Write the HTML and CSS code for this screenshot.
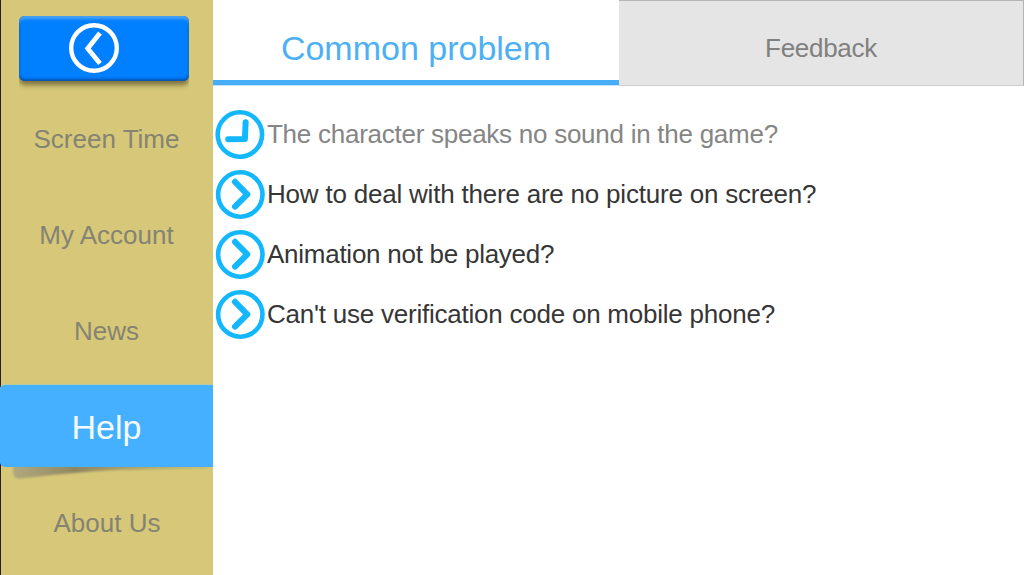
FILE: index.html
```html
<!DOCTYPE html>
<html lang="en">
<head>
<meta charset="utf-8">
<title>Help</title>
<link rel="stylesheet" href="styles.css">
</head>
<body>
<div class="app">
  <aside class="sidebar">
    <div class="back-wrap">
      <button class="back" aria-label="Back">
        <svg class="back-icon" width="50" height="50" viewBox="0 0 50 50" fill="none" stroke="#fff">
          <circle cx="25" cy="25" r="22.8" stroke-width="4.4"/>
          <path d="M31 10 L18.7 25.5 L31 40.5" stroke-width="4.8"/>
        </svg>
      </button>
    </div>
    <nav class="menu">
      <a class="item">Screen Time</a>
      <a class="item">My Account</a>
      <a class="item">News</a>
      <a class="item active">
        <svg class="fold" width="213" height="24" viewBox="0 0 213 24">
          <defs>
            <linearGradient id="shade" x1="0" x2="1" y1="0" y2="0">
              <stop offset="0" stop-color="#918d80" stop-opacity=".55"/>
              <stop offset=".32" stop-color="#77705a" stop-opacity=".75"/>
              <stop offset="1" stop-color="#a59b68" stop-opacity=".3"/>
            </linearGradient>
            <filter id="soft" x="-5%" y="-30%" width="110%" height="160%"><feGaussianBlur stdDeviation="1.2"/></filter>
          </defs>
          <path d="M13 -6 V7 Q14 13 20 12.5 C60 8 85 5.5 120 4 L208 2.5 V-6 Z" transform="translate(0 0)" fill="url(#shade)" filter="url(#soft)"/>
        </svg>
        <span class="label">Help</span>
      </a>
      <a class="item about">About Us</a>
    </nav>
  </aside>
  <main class="content">
    <div class="tabs">
      <div class="tab selected">Common problem</div>
      <div class="tab other">Feedback</div>
    </div>
    <ul class="questions">
      <li class="question read">
        <svg class="icon" width="50" height="50" viewBox="0 0 50 50"><circle cx="24.9" cy="24.5" r="22.2"/><path d="M30.6 12.3 L29.9 28.9 L13.2 29.2"/></svg>
        <span class="text t1">The character speaks no sound in the game?</span>
      </li>
      <li class="question">
        <svg class="icon" width="50" height="50" viewBox="0 0 50 50"><circle cx="25.3" cy="24.5" r="22.2"/><path d="M20 11.8 L32.3 24.3 L20 36.6"/></svg>
        <span class="text t2">How to deal with there are no picture on screen?</span>
      </li>
      <li class="question">
        <svg class="icon" width="50" height="50" viewBox="0 0 50 50"><circle cx="25.3" cy="24.5" r="22.2"/><path d="M20 11.8 L32.3 24.3 L20 36.6"/></svg>
        <span class="text t3">Animation not be played?</span>
      </li>
      <li class="question">
        <svg class="icon" width="50" height="50" viewBox="0 0 50 50"><circle cx="25.3" cy="24.5" r="22.2"/><path d="M20 11.8 L32.3 24.3 L20 36.6"/></svg>
        <span class="text t4">Can't use verification code on mobile phone?</span>
      </li>
    </ul>
  </main>
</div>
</body>
</html>
```
FILE: styles.css
```css
* { box-sizing: border-box; }
body { margin: 0; font-family: "Liberation Sans", Arial, sans-serif; font-size: 26px; background: #fff; overflow: hidden; }
.app { display: flex; width: 1024px; height: 575px; }
.sidebar { width: 213px; height: 575px; background: linear-gradient(90deg, #2a200c 1px, #d6c878 1px); padding-top: 16px; overflow: hidden; }
.back-wrap { width: 170px; height: 75px; margin-left: 19px; overflow: hidden; }
.back {
  display: flex; align-items: flex-start; width: 170px; height: 65px; margin: 0; padding: 7px 0 0 50px;
  border: 0; border-radius: 6px; background: #007fff;
  box-shadow: inset 0 4px 3px -1px #49a3f5, inset 0 -3px 3px -1px #0653ad, inset -1px 0 2px #0967c8, inset 1px 0 2px #0967c8, 0 4px 5px 0 rgba(85, 75, 40, .7);
}
.back-icon { display: block; flex: none; }
.menu { display: flex; flex-direction: column; }
.item { display: flex; align-items: center; justify-content: center; height: 96px; color: #858373; white-space: nowrap; }
.item.about { padding-left: 1px; }
.item.active { position: relative; align-items: flex-start; padding-top: 6px; color: #f4fbff; font-size: 34px; }
.label { width: 213px; height: 82px; line-height: 85px; text-align: center; background: #44b0ff; border-radius: 5px 0 0 5px; position: relative; box-shadow: 0 -1px 0 #b5cda0; }
.fold { position: absolute; left: 0; top: 87px; }
.content { flex: 1; }
.tabs { display: flex; height: 86px; }
.tab { display: flex; align-items: center; justify-content: center; height: 86px; white-space: nowrap; }
.selected { width: 406px; height: 85px; padding-top: 16px; color: #4db0f5; font-size: 34px; border-bottom: 5px solid #47adf7; box-shadow: 0 1px 0 #c4e2f8; }
.other { width: 405px; color: #808080; background: #e5e5e5; border: 1px solid #b5b5b5; border-left: 0; border-bottom-color: #cfcfcf; padding-top: 10px; letter-spacing: -.3px; }
.questions { list-style: none; margin: 0; padding: 24px 0 0 2px; }
.question { display: flex; height: 60px; color: #363636; }
.question.read { color: #858585; }
.icon { flex: none; fill: none; stroke: #12b7fd; stroke-width: 4.6; }
.icon path { stroke-width: 6; stroke-linecap: round; stroke-linejoin: round; }
.text { margin-left: 2px; line-height: 49px; height: 50px; white-space: nowrap; }
.t1 { letter-spacing: -.26px; }
.t2 { letter-spacing: -.21px; }
.t3 { letter-spacing: -.26px; }
.t4 { letter-spacing: -.23px; }
```
